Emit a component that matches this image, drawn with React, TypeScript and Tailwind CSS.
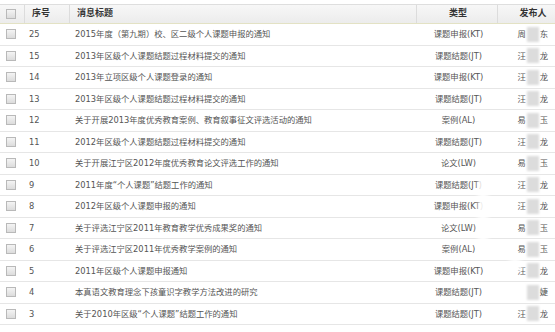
import React from "react";

type Row = { id: string; title: string; type: string; a: string; b: string };

const rows: Row[] = [
  { id: "25", title: "2015年度（第九期）校、区二级个人课题申报的通知", type: "课题申报(KT)", a: "周", b: "东" },
  { id: "15", title: "2013年区级个人课题结题过程材料提交的通知", type: "课题结题(JT)", a: "汪", b: "龙" },
  { id: "14", title: "2013年立项区级个人课题登录的通知", type: "课题申报(KT)", a: "汪", b: "龙" },
  { id: "13", title: "2013年区级个人课题结题过程材料提交的通知", type: "课题结题(JT)", a: "汪", b: "龙" },
  { id: "12", title: "关于开展2013年度优秀教育案例、教育叙事征文评选活动的通知", type: "案例(AL)", a: "易", b: "玉" },
  { id: "11", title: "2012年区级个人课题结题过程材料提交的通知", type: "课题结题(JT)", a: "汪", b: "龙" },
  { id: "10", title: "关于开展江宁区2012年度优秀教育论文评选工作的通知", type: "论文(LW)", a: "易", b: "玉" },
  { id: "9", title: "2011年度“个人课题”结题工作的通知", type: "课题结题(JT)", a: "汪", b: "龙" },
  { id: "8", title: "2012年区级个人课题申报的通知", type: "课题申报(KT)", a: "汪", b: "龙" },
  { id: "7", title: "关于评选江宁区2011年教育教学优秀成果奖的通知", type: "论文(LW)", a: "易", b: "玉" },
  { id: "6", title: "关于评选江宁区2011年优秀教学案例的通知", type: "案例(AL)", a: "易", b: "玉" },
  { id: "5", title: "2011年区级个人课题申报通知", type: "课题申报(KT)", a: "汪", b: "龙" },
  { id: "4", title: "本真语文教育理念下孩童识字教学方法改进的研究", type: "课题结题(JT)", a: "", b: "婕" },
  { id: "3", title: "关于2010年区级“个人课题”结题工作的通知", type: "课题结题(JT)", a: "汪", b: "龙" },
];

const font = { fontFamily: '"DejaVu Sans", "Noto Sans CJK SC", sans-serif' };

function Box() {
  return (
    <span className="inline-block w-[10px] h-[10px] border border-[#b9b9b9] bg-gradient-to-b from-[#f4f4f4] to-[#dcdcdc]" />
  );
}

const cols = "grid grid-cols-[25px_45px_347px_81px_70px]";

export default function App() {
  return (
    <div className="w-[555px] h-[332px] bg-white overflow-hidden relative" style={font}>
      <div className="w-[568px] pt-[4px]">
        <div className={`${cols} h-[20px] border-t border-[#dedede] border-b border-b-[#e3e2c4] bg-gradient-to-b from-[#f7f7f7] to-[#ececec] text-[9px] font-bold text-[#333]`}>
          <div className="flex items-center pl-[6px] border-r border-[#dcdcdc]"><Box /></div>
          <div className="flex items-center pl-[7px] border-r border-[#dcdcdc]">序号</div>
          <div className="flex items-center pl-[7px] border-r border-[#dcdcdc]">消息标题</div>
          <div className="flex items-center justify-center pl-[2px] border-r border-[#dcdcdc]">类型</div>
          <div className="flex items-center justify-center">发布人</div>
        </div>
        {rows.map((r) => (
          <div key={r.id} className={`${cols} h-[21.5px] border-b border-[#e6e6e6] text-[8.3px] text-[#555]`}>
            <div className="flex items-center pl-[6px]"><Box /></div>
            <div className="flex items-center pl-[4px]">{r.id}</div>
            <div className="flex items-center pl-[5px] whitespace-nowrap overflow-hidden">{r.title}</div>
            <div className="flex items-center justify-center pl-[2px] whitespace-nowrap">{r.type}</div>
            <div className="flex items-center justify-center whitespace-nowrap">
              <span className="w-[8px] text-center">{r.a}</span>
              <span className="inline-block w-[12px] h-[15px] bg-[#dcdcdc] blur-[1px] mx-[1px]" />
              <span className="w-[9px] text-center">{r.b}</span>
            </div>
          </div>
        ))}
      </div>
      <div className="absolute left-[478px] top-[178px] w-[10px] h-[70px] bg-white blur-[2px] opacity-90" />
      <div className="absolute left-[508px] top-[258px] w-[14px] h-[14px] bg-white rounded-full blur-[2px]" />
    </div>
  );
}
